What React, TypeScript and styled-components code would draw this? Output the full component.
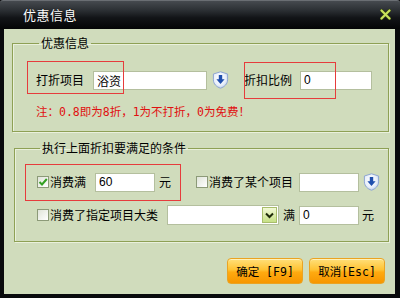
import styled, { createGlobalStyle } from 'styled-components';

const GlobalStyle = createGlobalStyle`
  html, body {
    margin: 0;
    padding: 0;
    background: #000;
  }
  body {
    font-family: "Noto Sans CJK SC", "Noto Sans", sans-serif;
    font-size: 12px;
  }
`;

const Window = styled.div`
  width: 400px;
  height: 298px;
  display: flex;
  flex-direction: column;
  background: #090a0c;
  overflow: hidden;
`;

const TitleBar = styled.div`
  height: 29px;
  flex: none;
  display: flex;
  align-items: center;
  justify-content: space-between;
  padding: 0 9px 1px 23px;
  box-sizing: border-box;
  border-top: 1px solid #6a6e73;
  border-radius: 3px 3px 0 0;
  background: linear-gradient(#464a4f 0%, #2a2e32 35%, #121417 60%, #040506 100%);
  color: #fff;
  font-size: 13px;
  letter-spacing: 0.5px;
  text-shadow: 0 0 1px #000;
`;

const Frame = styled.div`
  flex: 1;
  display: flex;
  padding: 0 5px 4px 4px;
`;

const Content = styled.div`
  flex: 1;
  position: relative;
  display: flex;
  flex-direction: column;
  background: #d0dcbc;
  padding-top: 7px;
`;

const Group = styled.fieldset<{ $left: number; $top: number }>`
  margin: ${(p) => p.$top}px 6px 0 ${(p) => p.$left}px;
  min-width: 0;
  border: 1px solid #8ea055;
  box-shadow: 1px 1px 0 #e9f0dc, inset 1px 1px 0 #e9f0dc;
  display: flex;
  flex-direction: column;
`;

const Legend = styled.legend`
  margin-left: 3px;
  padding: 0 2px;
  line-height: 14px;
  font-size: 12px;
  color: #000;
`;

const Row = styled.div<{ $gap?: number }>`
  display: flex;
  align-items: center;
  height: 20px;
  margin-top: ${(p) => p.$gap ?? 0}px;
`;

const Label = styled.span<{ $ml?: number; $mr?: number }>`
  color: #000;
  line-height: 14px;
  white-space: nowrap;
  margin-left: ${(p) => p.$ml ?? 0}px;
  margin-right: ${(p) => p.$mr ?? 0}px;
`;

const Field = styled.input<{ $w: number; $ml?: number }>`
  box-sizing: border-box;
  width: ${(p) => p.$w}px;
  height: 19px;
  margin: 0 0 0 ${(p) => p.$ml ?? 0}px;
  padding: 0 3px;
  border: 1px solid #b4bf9e;
  background: #fff;
  font-family: "Liberation Sans", "Noto Sans CJK SC", sans-serif;
  font-size: 12px;
  color: #000;
  outline: none;
`;

const Note = styled.div`
  margin-top: 15px;
  height: 14px;
  line-height: 14px;
  color: #e01010;
  font-family: "DejaVu Sans Mono", "Noto Sans CJK SC", monospace;
  font-size: 11.5px;
`;

const Check = styled.span<{ $ml?: number }>`
  box-sizing: border-box;
  width: 12px;
  height: 12px;
  flex: none;
  margin: 0 1px 0 ${(p) => p.$ml ?? 0}px;
  border: 1px solid #8c9a78;
  background: linear-gradient(135deg, #dfe4d8, #ffffff);
  display: flex;
  align-items: center;
  justify-content: center;
`;

const Select = styled.div<{ $w: number; $ml?: number }>`
  box-sizing: border-box;
  width: ${(p) => p.$w}px;
  height: 20px;
  margin-left: ${(p) => p.$ml ?? 0}px;
  border: 1px solid #b4bf9e;
  background: #fff;
  display: flex;
  justify-content: flex-end;
  align-items: stretch;
  padding: 1px;
`;

const SelectArrow = styled.span`
  width: 15px;
  box-sizing: border-box;
  border: 1px solid #a8bd6c;
  background: linear-gradient(#f2f9d6, #c6e085);
  display: flex;
  align-items: center;
  justify-content: center;
`;

const Buttons = styled.div`
  display: flex;
  justify-content: flex-end;
  gap: 6px;
  margin-top: 16px;
  padding-right: 10px;
`;

const Button = styled.button`
  width: 76px;
  height: 26px;
  padding: 0;
  border: 1px solid #eaa323;
  border-radius: 4px;
  background: linear-gradient(#ffe07a 0%, #ffc232 45%, #ffaa10 55%, #f79600 100%);
  box-shadow: inset 0 1px 0 #fff1b8;
  font-family: "DejaVu Sans Mono", "Noto Sans CJK SC", monospace;
  font-size: 11.5px;
  color: #000;
  white-space: pre;
`;

const Mark = styled.div<{ $x: number; $y: number; $w: number; $h: number }>`
  position: absolute;
  z-index: 2;
  left: ${(p) => p.$x}px;
  top: ${(p) => p.$y}px;
  width: ${(p) => p.$w}px;
  height: ${(p) => p.$h}px;
  box-sizing: border-box;
  box-shadow: inset 0 0 0 1px #e63c3c;
  pointer-events: none;
`;

const CloseIcon = () => (
  <svg width="11" height="11" viewBox="0 0 11 11">
    <path d="M1.5 1.5 L9.5 9.5 M9.5 1.5 L1.5 9.5" stroke="#2c3a10" strokeWidth="3.6" strokeLinecap="round" />
    <path d="M1.5 1.5 L9.5 9.5 M9.5 1.5 L1.5 9.5" stroke="#c9e35c" strokeWidth="2.2" strokeLinecap="round" />
  </svg>
);

const Shield = ({ ml }: { ml: number }) => (
  <svg width="17" height="18" viewBox="0 0 17 18" style={{ marginLeft: ml, flex: 'none' }}>
    <defs>
      <radialGradient id="sh" cx="0.45" cy="0.4" r="0.7">
        <stop offset="0" stopColor="#ffffff" />
        <stop offset="0.6" stopColor="#e8effa" />
        <stop offset="1" stopColor="#a9bfe6" />
      </radialGradient>
    </defs>
    <path
      d="M8.5 0.8 L15.6 3 V8.8 C15.6 13 12.4 15.9 8.5 17.2 C4.6 15.9 1.4 13 1.4 8.8 V3 Z"
      fill="url(#sh)"
      stroke="#8ea6d2"
      strokeWidth="1"
    />
    <path d="M6.8 4 H10.2 V8.2 H12.6 L8.5 13 L4.4 8.2 H6.8 Z" fill="#1f4fae" />
  </svg>
);

const Tick = () => (
  <svg width="10" height="10" viewBox="0 0 10 10">
    <path d="M1.5 5 L4 7.5 L8.8 2" stroke="#33a022" strokeWidth="2" fill="none" />
  </svg>
);

const Chevron = () => (
  <svg width="9" height="7" viewBox="0 0 9 7">
    <path d="M1 1.5 L4.5 5 L8 1.5" stroke="#1e2a08" strokeWidth="2" fill="none" />
  </svg>
);

export default function App() {
  return (
    <>
      <GlobalStyle />
      <Window>
        <TitleBar>
          <span>优惠信息</span>
          <CloseIcon />
        </TitleBar>
        <Frame>
          <Content>
            <Group $left={8} $top={0} style={{ padding: '20px 0 12px 23px' }}>
              <Legend>优惠信息</Legend>
              <Row>
                <Label $mr={9}>打折项目</Label>
                <Field $w={114} defaultValue="浴资" readOnly />
                <Shield ml={5} />
                <Label $ml={15} $mr={8}>折扣比例</Label>
                <Field $w={72} defaultValue="0" readOnly />
              </Row>
              <Note>注：0.8即为8折，1为不打折，0为免费！</Note>
            </Group>

            <Group $left={10} $top={9} style={{ padding: '17px 0 16px 22px' }}>
              <Legend>执行上面折扣要满足的条件</Legend>
              <Row>
                <Check>
                  <Tick />
                </Check>
                <Label $mr={9}>消费满</Label>
                <Field $w={60} defaultValue="60" readOnly />
                <Label $ml={4}>元</Label>
                <Check $ml={25} />
                <Label $mr={6}>消费了某个项目</Label>
                <Field $w={60} defaultValue="" readOnly />
                <Shield ml={4} />
              </Row>
              <Row $gap={13}>
                <Check />
                <Label>消费了指定项目大类</Label>
                <Select $w={112} $ml={9}>
                  <SelectArrow>
                    <Chevron />
                  </SelectArrow>
                </Select>
                <Label $ml={4} $mr={4}>满</Label>
                <Field $w={60} defaultValue="0" readOnly />
                <Label $ml={3}>元</Label>
              </Row>
            </Group>

            <Buttons>
              <Button>确定 [F9]</Button>
              <Button>取消[Esc]</Button>
            </Buttons>

            <Mark $x={23} $y={32} $w={97} $h={33} />
            <Mark $x={240} $y={33} $w={92} $h={37} />
            <Mark $x={21} $y={135} $w={156} $h={37} />
          </Content>
        </Frame>
      </Window>
    </>
  );
}
